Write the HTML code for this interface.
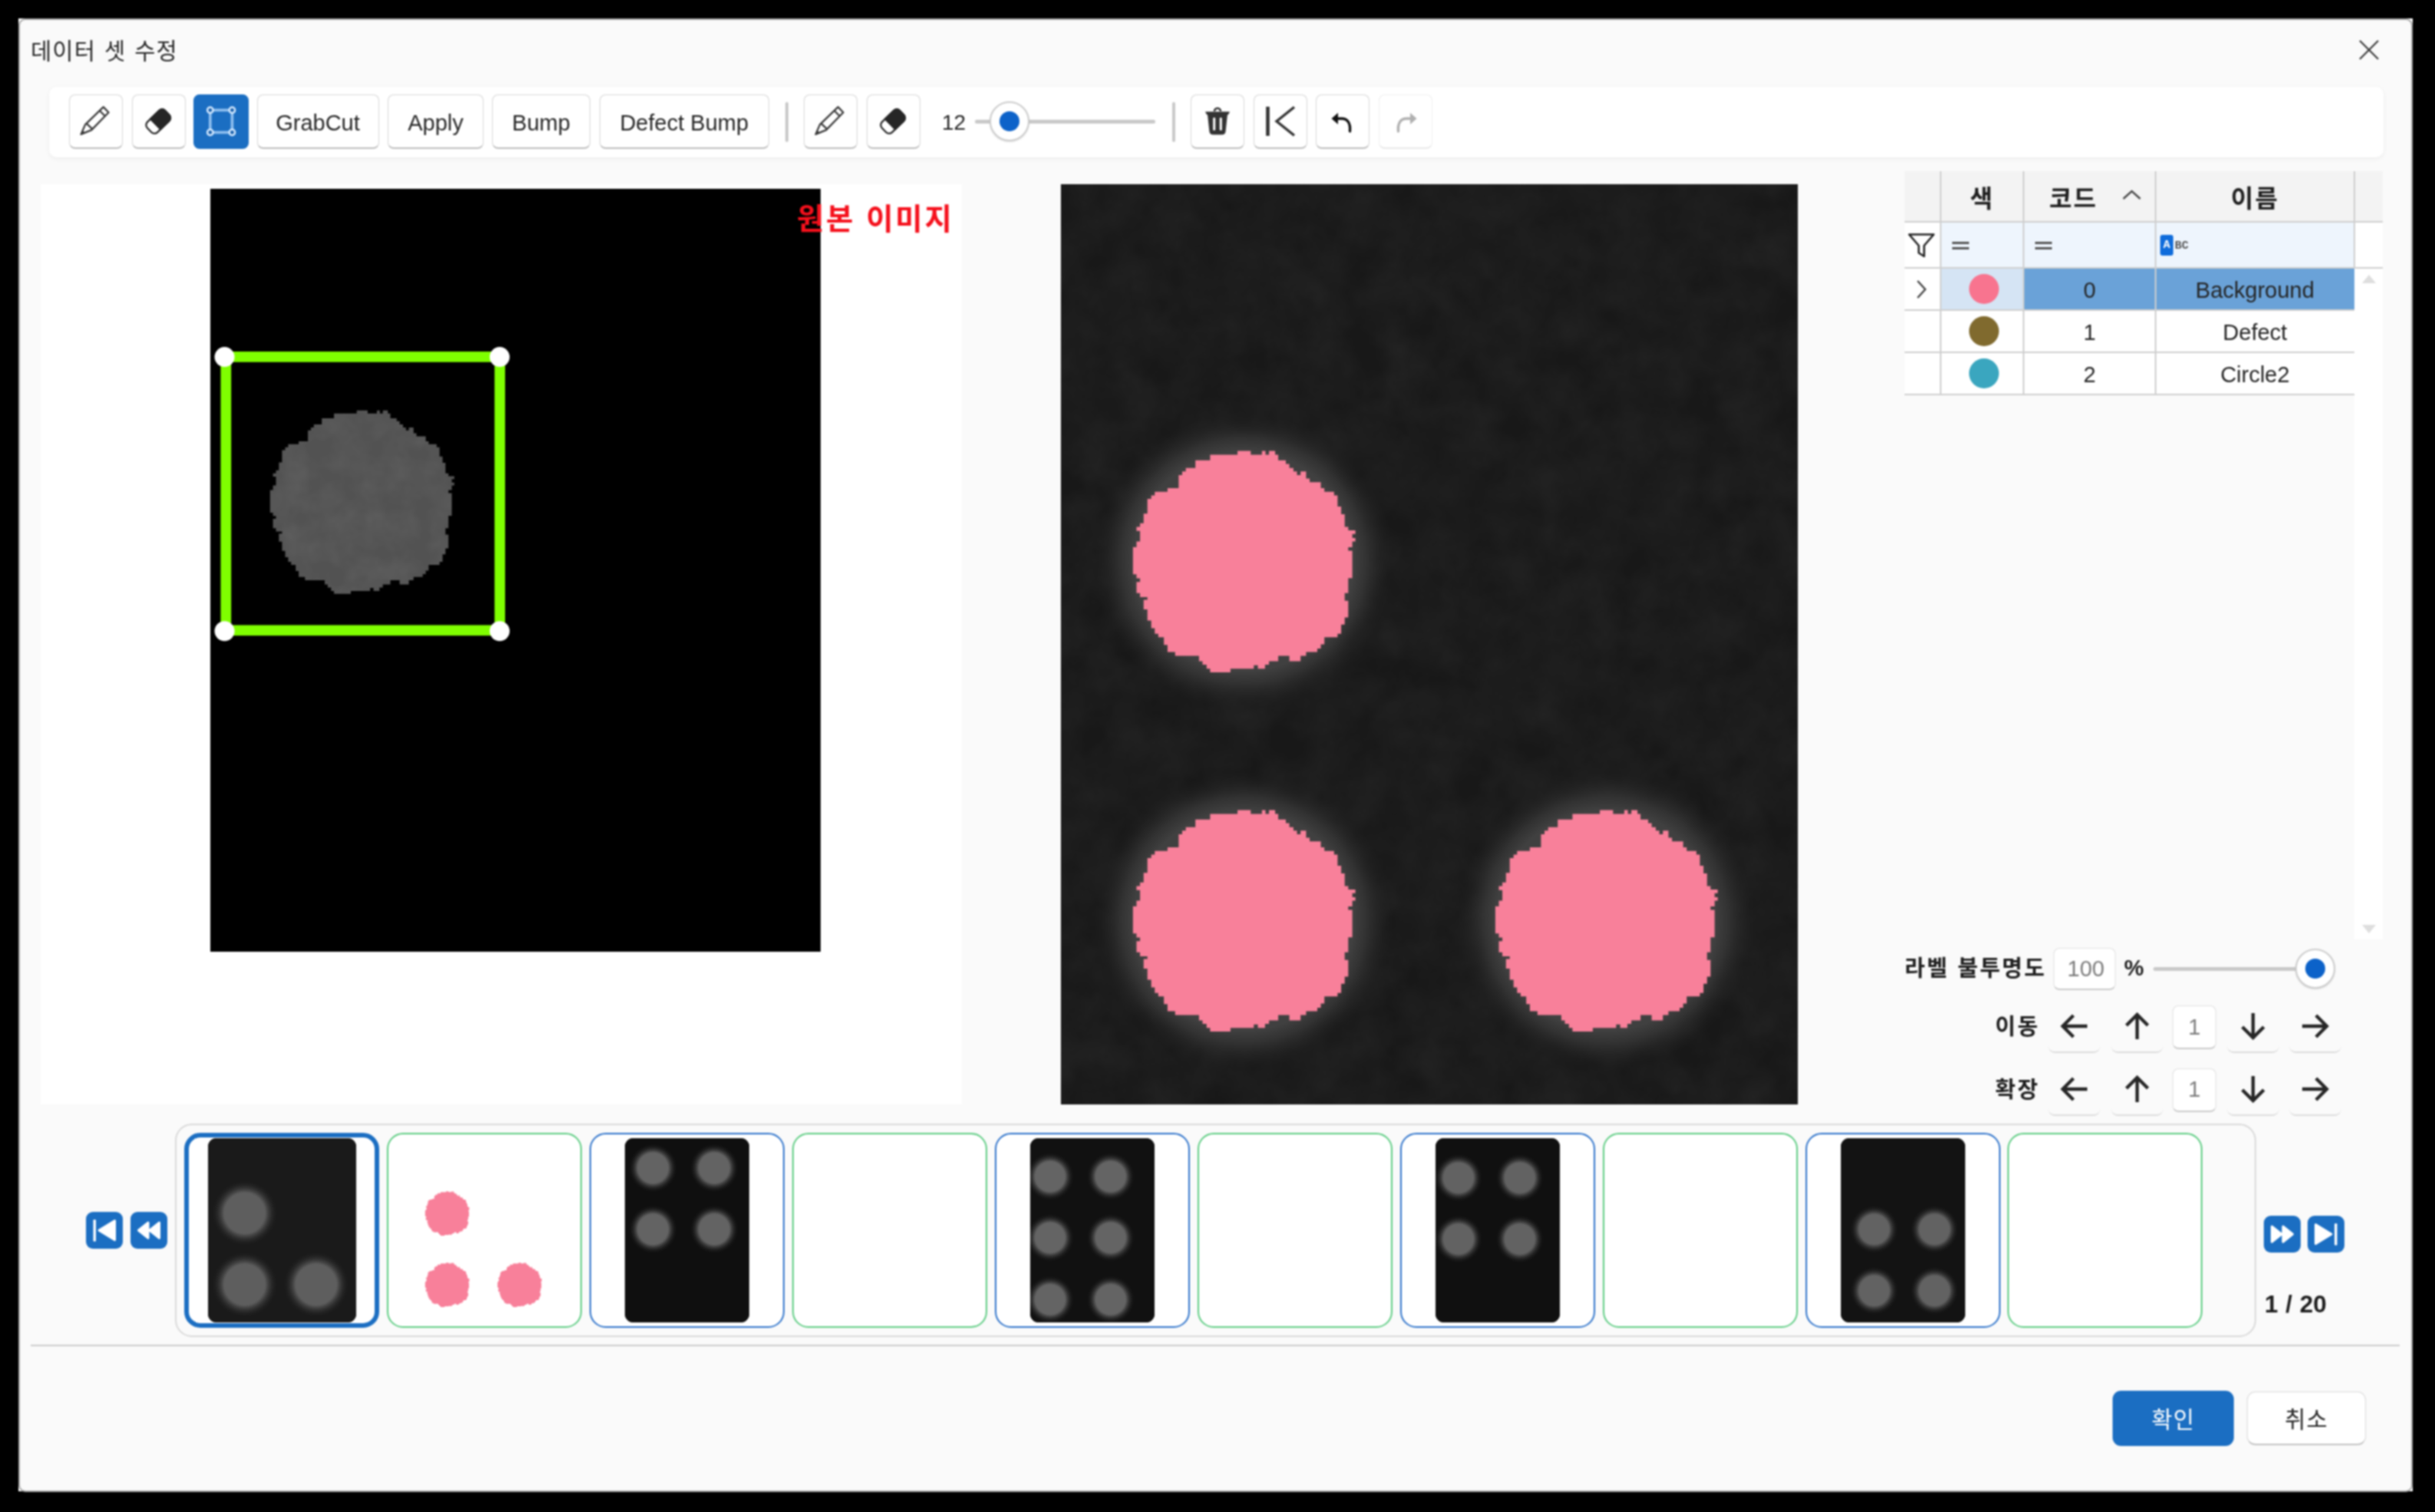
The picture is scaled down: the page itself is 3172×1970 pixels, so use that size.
<!DOCTYPE html><html lang="ko"><head><meta charset="utf-8"><title>데이터 셋 수정</title><style>
*{box-sizing:border-box;margin:0;padding:0}
html,body{width:3172px;height:1970px;background:#000;overflow:hidden}
body{position:relative;font-family:"Liberation Sans", "Noto Sans CJK KR", sans-serif;color:#333;font-size:29px;filter:blur(0.85px)}
.abs{position:absolute}
.corner{position:absolute;width:12px;height:12px;background:#fff}
#dlg{position:absolute;left:24px;top:24px;width:3119px;height:1919.5px;background:#fafafa;border:2px solid #a6a6a6;border-radius:9px}
#title{position:absolute;left:40px;top:45px;font-size:29.5px;line-height:44px;color:#262626;white-space:nowrap;letter-spacing:1.2px;word-spacing:1.5px}
#toolbar{position:absolute;left:64px;top:113px;width:3041px;height:92px;background:#fff;border-radius:10px;box-shadow:0 2px 6px rgba(0,0,0,.06)}
.tb{position:absolute;top:123px;height:71px;background:#fff;border:1.8px solid #d6d6d6;border-bottom:2.4px solid #bdbdbd;border-radius:8px;display:flex;align-items:center;justify-content:center;font-size:29px;color:#262626;white-space:nowrap}
.tb.tx{padding-top:5px}
.tb .ic{position:absolute;left:-1.6px;top:-1.6px}
.tb.on{background:#1b6ec2;border-color:#1b6ec2;top:122.9px;height:70.7px}
.tb.dis{border-color:#efefef;border-bottom-color:#e8e8e8}
.sep{position:absolute;top:132.5px;width:4.6px;height:52px;background:#c8c8c8;border-radius:2px}
.track{position:absolute;height:5px;background:#c9c9c9;border-radius:2.5px}
.knob{position:absolute;width:52px;height:52px;border-radius:50%;background:#fff;border:2px solid #cdcdcd;box-shadow:0 1px 2px rgba(0,0,0,.15)}
.knob i{position:absolute;left:50%;top:50%;width:26px;height:26px;margin:-13px 0 0 -13px;border-radius:50%;background:#0c62c9}
#lpanel{position:absolute;left:52.5px;top:240px;width:1200.5px;height:1199px;background:#fff}
#limg{position:absolute;left:274px;top:246px;width:795px;height:994px;background:#000}
#rimg{position:absolute;left:1382px;top:240px;width:960px;height:1199px;background:#1c1c1c;overflow:hidden}
#orig{position:absolute;left:1038px;top:261.5px;font-size:38.5px;line-height:48px;font-weight:bold;color:#f5101c;white-space:nowrap;letter-spacing:2.6px;word-spacing:1px}
.th{position:absolute;top:1476px;width:254px;height:254px;border-radius:21px;background:#fff}
.th.g{border:2.4px solid #5dcc82}
.th.b{border:2.4px solid #2d72ca}
.th.sel{border:6.2px solid #1b6ec2}
.ti{position:absolute;top:1483px;height:240px;border-radius:11px;overflow:hidden;background:#151515}
#strip{position:absolute;left:228px;top:1464px;width:2711px;height:277.5px;border:2px solid #d9d9d9;border-radius:22px;background:#fafafa}
.nav{position:absolute;width:48px;height:48px;border-radius:9px;background:#1b6ec2}
#hr{position:absolute;left:40px;top:1751.5px;width:3086px;height:2.8px;background:#cbcbcb}
#ok{position:absolute;left:2752px;top:1812px;width:158px;height:72px;border-radius:11px;background:#1b6ec2;color:#fff;font-size:29.5px;letter-spacing:1px;padding-bottom:2px;display:flex;align-items:center;justify-content:center}
#cancel{position:absolute;left:2927px;top:1813px;width:155px;height:70px;border-radius:11px;background:#fff;border:1.8px solid #dadada;border-bottom:2.4px solid #c2c2c2;color:#262626;font-size:29.5px;letter-spacing:1px;padding-bottom:2px;display:flex;align-items:center;justify-content:center}
.lbl{position:absolute;font-weight:bold;font-size:29px;line-height:40px;white-space:nowrap;color:#1e1e1e;letter-spacing:2.2px;word-spacing:1px}
.inp{position:absolute;background:#fff;border:1.8px solid #e0e0e0;border-bottom:2.4px solid #cacaca;border-radius:8px;color:#7c7c7c;font-size:29px;display:flex;align-items:center}
.ab{position:absolute;width:68px;height:65px;border-radius:9px;border-bottom:2.4px solid #dcdcdc}
/* table */
.cell{position:absolute;display:flex;align-items:center;justify-content:center;font-size:29px;color:#242424;white-space:nowrap;padding-top:4px}
.cell .dot{margin-top:-4px;margin-left:4px;width:39px;height:39px}
.vl{position:absolute;width:2px;background:#cecece}
.hl{position:absolute;height:2px;background:#cecece}
.dot{width:40px;height:40px;border-radius:50%}
</style></head><body>
<div class="corner" style="left:24px;top:24px"></div>
<div class="corner" style="left:3131px;top:24px"></div>
<div class="corner" style="left:24px;top:1931px"></div>
<div class="corner" style="left:3131px;top:1931px"></div>
<div id="dlg"></div>
<div id="title">데이터 셋 수정</div>
<svg class="abs" style="left:3070.5px;top:50px" width="30" height="30" viewBox="0 0 30 30"><path d="M3 3 L27 27 M27 3 L3 27" stroke="#3a3a3a" stroke-width="2.2" fill="none"/></svg>
<div id="toolbar"></div>
<div class="tb " style="left:90.0px;width:70.0px"><svg class="ic" width="70" height="70" viewBox="0 0 70 70"><g fill="none" stroke="#3a3a3a" stroke-width="2.3" stroke-linejoin="round"><path d="M45.7 17.4 L52.5 24.5 L30.2 47.4 L16.6 52.9 L22 40.4 Z"/><path d="M40.9 22.2 L47.8 29.3"/><path d="M23.6 38.8 L31.4 46.2"/></g><path d="M15.4 54.2 L18.3 47.4 L22.6 51.4 Z" fill="#3a3a3a"/></svg></div>
<div class="tb " style="left:171.5px;width:70.0px"><svg class="ic" width="70" height="70" viewBox="0 0 70 70"><g transform="rotate(-44 35.2 36.2)"><rect x="19" y="26.8" width="32.4" height="18.8" rx="5.6" fill="#fff" stroke="#2a2a2a" stroke-width="2.3"/><path d="M30.2 26.8 H45.8 a5.6 5.6 0 0 1 5.6 5.6 v7.6 a5.6 5.6 0 0 1 -5.6 5.6 H30.2 Z" fill="#262626" stroke="#262626" stroke-width="2.3"/></g></svg></div>
<div class="tb on" style="left:252.0px;width:72.0px"><svg class="ic" width="72" height="72" viewBox="0 0 72 72"><rect x="22.8" y="21.5" width="28.6" height="29" fill="none" stroke="#8fbfef" stroke-width="3.7"/><g fill="#1b62ae" stroke="#d4e9ff" stroke-width="2.5"><circle cx="22.8" cy="21.5" r="3.7"/><circle cx="51.4" cy="21.5" r="3.7"/><circle cx="22.8" cy="50.5" r="3.7"/><circle cx="51.4" cy="50.5" r="3.7"/></g></svg></div>
<div class="tb tx" style="left:334.5px;width:159.0px">GrabCut</div>
<div class="tb tx" style="left:505.0px;width:125.0px">Apply</div>
<div class="tb tx" style="left:641.0px;width:128.0px">Bump</div>
<div class="tb tx" style="left:780.5px;width:221.5px">Defect Bump</div>
<div class="sep" style="left:1022.5px"></div>
<div class="tb " style="left:1047.0px;width:70.0px"><svg class="ic" width="70" height="70" viewBox="0 0 70 70"><g fill="none" stroke="#3a3a3a" stroke-width="2.3" stroke-linejoin="round"><path d="M45.7 17.4 L52.5 24.5 L30.2 47.4 L16.6 52.9 L22 40.4 Z"/><path d="M40.9 22.2 L47.8 29.3"/><path d="M23.6 38.8 L31.4 46.2"/></g><path d="M15.4 54.2 L18.3 47.4 L22.6 51.4 Z" fill="#3a3a3a"/></svg></div>
<div class="tb " style="left:1128.5px;width:70.0px"><svg class="ic" width="70" height="70" viewBox="0 0 70 70"><g transform="rotate(-44 35.2 36.2)"><rect x="19" y="26.8" width="32.4" height="18.8" rx="5.6" fill="#fff" stroke="#2a2a2a" stroke-width="2.3"/><path d="M30.2 26.8 H45.8 a5.6 5.6 0 0 1 5.6 5.6 v7.6 a5.6 5.6 0 0 1 -5.6 5.6 H30.2 Z" fill="#262626" stroke="#262626" stroke-width="2.3"/></g></svg></div>
<div class="abs" style="left:1227px;top:140px;font-size:28px;line-height:40px;color:#242424">12</div>
<div class="track" style="left:1270px;top:156px;width:235px"></div>
<div class="knob" style="left:1288.5px;top:132px"><i></i></div>
<div class="sep" style="left:1526.5px"></div>
<div class="tb " style="left:1551.0px;width:70.0px"><svg width="34" height="38" viewBox="0 0 34 38"><path d="M13 6 a4 4 0 0 1 8 0" fill="none" stroke="#333" stroke-width="2.6"/><path d="M1 6.5 H33 L31 10.5 H3 Z" fill="#333"/><path d="M4 10 H30 L27.6 32 a5 5 0 0 1 -5 4.5 H11.4 a5 5 0 0 1 -5 -4.5 Z" fill="#333"/><rect x="11.2" y="14" width="3" height="17" rx="1.5" fill="#fff"/><rect x="19.8" y="14" width="3" height="17" rx="1.5" fill="#fff"/></svg></div>
<div class="tb " style="left:1632.5px;width:70.0px"><svg width="44" height="44" viewBox="0 0 44 44"><path d="M5.5 3 V41" stroke="#333" stroke-width="4.6" fill="none"/><path d="M40 3.5 L17 22 L40 40.5" stroke="#333" stroke-width="3.4" fill="none" stroke-linejoin="miter"/></svg></div>
<div class="tb " style="left:1714.0px;width:70.0px"><span style="display:flex;padding-top:3px"><svg width="32" height="30" viewBox="0 0 32 30"><path d="M9 9.5 H15 C22 9.5 26.5 15 25.5 26" fill="none" stroke="#111" stroke-width="3.4" stroke-linecap="round"/><path d="M1.5 9.5 L10 2 V17 Z" fill="#111"/></svg></span></div>
<div class="tb dis" style="left:1795.5px;width:70.0px"><span style="display:flex;padding-top:3px"><svg width="32" height="30" viewBox="0 0 32 30"><path d="M23 9.5 H17 C10 9.5 5.5 15 6.5 26" fill="none" stroke="#b0b0b0" stroke-width="3.4" stroke-linecap="round"/><path d="M30.500 9.5 L22 2 V17 Z" fill="#b0b0b0"/></svg></span></div>
<div id="lpanel"></div><div id="limg"></div>
<svg class="abs" style="left:274px;top:246px" width="795" height="994" viewBox="274 246 795 994">
<defs><clipPath id="bc"><path d="M464.7,534.7 L478.9,534.7 L478.9,538.8 L491.0,538.8 L491.0,534.7 L494.8,534.7 L494.8,538.8 L498.7,538.8 L498.7,534.7 L505.2,534.7 L505.2,538.8 L508.5,538.8 L508.5,544.9 L516.7,544.9 L516.7,548.7 L520.6,548.7 L520.6,553.1 L525.0,553.1 L525.0,556.9 L528.8,556.9 L528.8,560.8 L532.6,560.8 L532.6,556.9 L538.7,556.9 L538.7,564.6 L542.5,564.6 L542.5,568.4 L554.6,568.4 L554.6,575.0 L558.4,575.0 L558.4,578.8 L568.8,578.8 L568.8,582.7 L572.6,582.7 L572.6,594.7 L576.5,594.7 L576.5,603.0 L580.3,603.0 L580.3,616.7 L584.2,616.7 L584.2,620.5 L591.8,620.5 L591.8,624.3 L588.5,624.3 L588.5,628.7 L591.8,628.7 L591.8,632.6 L588.5,632.6 L588.5,638.6 L584.2,638.6 L584.2,642.4 L588.5,642.4 L588.5,672.0 L584.2,672.0 L584.2,688.2 L580.3,688.2 L580.3,696.4 L584.2,696.4 L584.2,714.5 L580.3,714.5 L580.3,722.2 L576.5,722.2 L576.5,732.0 L572.6,732.0 L572.6,735.9 L558.4,735.9 L558.4,743.6 L554.6,743.6 L554.6,747.9 L550.7,747.9 L550.7,751.8 L538.7,751.8 L538.7,755.9 L532.6,755.9 L532.6,761.6 L520.6,761.6 L520.6,755.9 L508.5,755.9 L508.5,761.6 L498.7,761.6 L498.7,765.5 L494.3,765.5 L494.3,769.9 L486.6,769.9 L486.6,766.0 L482.2,766.0 L482.2,769.9 L457.0,769.9 L457.0,773.7 L435.1,773.7 L435.1,769.9 L431.3,769.9 L431.3,765.5 L426.9,765.5 L426.9,761.6 L423.0,761.6 L423.0,755.9 L397.3,755.9 L397.3,751.8 L389.1,751.8 L389.1,744.1 L385.2,744.1 L385.2,735.9 L379.2,735.9 L379.2,732.0 L375.4,732.0 L375.4,726.0 L371.5,726.0 L371.5,717.8 L367.4,717.8 L367.4,705.7 L363.3,705.7 L363.3,695.3 L367.4,695.3 L367.4,692.6 L359.5,692.6 L359.5,688.2 L355.6,688.2 L355.6,676.1 L359.5,676.1 L359.5,672.3 L355.6,672.3 L355.6,667.9 L351.8,667.9 L351.8,638.6 L355.6,638.6 L355.6,632.6 L359.5,632.6 L359.5,621.0 L355.6,621.0 L355.6,616.7 L359.5,616.7 L359.5,612.8 L363.3,612.8 L363.3,602.4 L367.4,602.4 L367.4,586.5 L371.5,586.5 L371.5,582.7 L375.4,582.7 L375.4,578.8 L389.1,578.8 L389.1,575.0 L401.1,575.0 L401.1,560.8 L405.0,560.8 L405.0,556.9 L408.8,556.9 L408.8,553.1 L419.2,553.1 L419.2,544.9 L435.1,544.9 L435.1,538.8 L464.7,538.8Z"/></clipPath><filter id="nz2" x="0" y="0" width="100%" height="100%"><feTurbulence type="fractalNoise" baseFrequency="0.03" numOctaves="3" seed="11"/><feColorMatrix type="matrix" values="0 0 0 0 1  0 0 0 0 1  0 0 0 0 1  0.06 0.06 0.06 0 -0.07"/></filter></defs>
<path d="M464.7,534.7 L478.9,534.7 L478.9,538.8 L491.0,538.8 L491.0,534.7 L494.8,534.7 L494.8,538.8 L498.7,538.8 L498.7,534.7 L505.2,534.7 L505.2,538.8 L508.5,538.8 L508.5,544.9 L516.7,544.9 L516.7,548.7 L520.6,548.7 L520.6,553.1 L525.0,553.1 L525.0,556.9 L528.8,556.9 L528.8,560.8 L532.6,560.8 L532.6,556.9 L538.7,556.9 L538.7,564.6 L542.5,564.6 L542.5,568.4 L554.6,568.4 L554.6,575.0 L558.4,575.0 L558.4,578.8 L568.8,578.8 L568.8,582.7 L572.6,582.7 L572.6,594.7 L576.5,594.7 L576.5,603.0 L580.3,603.0 L580.3,616.7 L584.2,616.7 L584.2,620.5 L591.8,620.5 L591.8,624.3 L588.5,624.3 L588.5,628.7 L591.8,628.7 L591.8,632.6 L588.5,632.6 L588.5,638.6 L584.2,638.6 L584.2,642.4 L588.5,642.4 L588.5,672.0 L584.2,672.0 L584.2,688.2 L580.3,688.2 L580.3,696.4 L584.2,696.4 L584.2,714.5 L580.3,714.5 L580.3,722.2 L576.5,722.2 L576.5,732.0 L572.6,732.0 L572.6,735.9 L558.4,735.9 L558.4,743.6 L554.6,743.6 L554.6,747.9 L550.7,747.9 L550.7,751.8 L538.7,751.8 L538.7,755.9 L532.6,755.9 L532.6,761.6 L520.6,761.6 L520.6,755.9 L508.5,755.9 L508.5,761.6 L498.7,761.6 L498.7,765.5 L494.3,765.5 L494.3,769.9 L486.6,769.9 L486.6,766.0 L482.2,766.0 L482.2,769.9 L457.0,769.9 L457.0,773.7 L435.1,773.7 L435.1,769.9 L431.3,769.9 L431.3,765.5 L426.9,765.5 L426.9,761.6 L423.0,761.6 L423.0,755.9 L397.3,755.9 L397.3,751.8 L389.1,751.8 L389.1,744.1 L385.2,744.1 L385.2,735.9 L379.2,735.9 L379.2,732.0 L375.4,732.0 L375.4,726.0 L371.5,726.0 L371.5,717.8 L367.4,717.8 L367.4,705.7 L363.3,705.7 L363.3,695.3 L367.4,695.3 L367.4,692.6 L359.5,692.6 L359.5,688.2 L355.6,688.2 L355.6,676.1 L359.5,676.1 L359.5,672.3 L355.6,672.3 L355.6,667.9 L351.8,667.9 L351.8,638.6 L355.6,638.6 L355.6,632.6 L359.5,632.6 L359.5,621.0 L355.6,621.0 L355.6,616.7 L359.5,616.7 L359.5,612.8 L363.3,612.8 L363.3,602.4 L367.4,602.4 L367.4,586.5 L371.5,586.5 L371.5,582.7 L375.4,582.7 L375.4,578.8 L389.1,578.8 L389.1,575.0 L401.1,575.0 L401.1,560.8 L405.0,560.8 L405.0,556.9 L408.8,556.9 L408.8,553.1 L419.2,553.1 L419.2,544.9 L435.1,544.9 L435.1,538.8 L464.7,538.8Z" fill="#525252"/>
<rect x="345" y="530" width="255" height="250" filter="url(#nz2)" clip-path="url(#bc)"/>
<rect x="294.3" y="464.9" width="356.8" height="356.4" fill="none" stroke="#7fff00" stroke-width="13.7"/>
<circle cx="292.5" cy="465.1" r="13" fill="#fff"/>
<circle cx="650.9" cy="465.1" r="13" fill="#fff"/>
<circle cx="292.5" cy="822.2" r="13" fill="#fff"/>
<circle cx="650.9" cy="822.2" r="13" fill="#fff"/>
</svg>
<div id="orig">원본 이미지</div>
<div id="rimg"><svg width="960" height="1199" viewBox="1382 240 960 1199">
<defs><radialGradient id="gl"><stop offset="0" stop-color="#424242"/><stop offset="0.73" stop-color="#404040"/><stop offset="0.81" stop-color="#383838" stop-opacity=".8"/><stop offset="0.9" stop-color="#2e2e2e" stop-opacity=".35"/><stop offset="1" stop-color="#1d1d1d" stop-opacity="0"/></radialGradient>
<filter id="nz" x="0" y="0" width="100%" height="100%"><feTurbulence type="fractalNoise" baseFrequency="0.02" numOctaves="4" seed="7"/><feColorMatrix type="matrix" values="0 0 0 0 1  0 0 0 0 1  0 0 0 0 1  0.035 0.035 0.035 0 -0.035"/></filter></defs>
<rect x="1382" y="240" width="960" height="1199" fill="#181818"/>
<rect x="1382" y="240" width="960" height="1199" filter="url(#nz)"/>
<circle cx="1620" cy="731" r="197" fill="url(#gl)"/>
<path d="M1612.1,587.5 L1629.3,587.5 L1629.3,592.5 L1643.9,592.5 L1643.9,587.5 L1648.5,587.5 L1648.5,592.5 L1653.1,592.5 L1653.1,587.5 L1661.1,587.5 L1661.1,592.5 L1665.1,592.5 L1665.1,599.8 L1675.0,599.8 L1675.0,604.4 L1679.6,604.4 L1679.6,609.7 L1684.9,609.7 L1684.9,614.3 L1689.5,614.3 L1689.5,618.9 L1694.2,618.9 L1694.2,614.3 L1701.4,614.3 L1701.4,623.6 L1706.1,623.6 L1706.1,628.2 L1720.6,628.2 L1720.6,636.1 L1725.2,636.1 L1725.2,640.8 L1737.8,640.8 L1737.8,645.4 L1742.4,645.4 L1742.4,660.0 L1747.1,660.0 L1747.1,669.9 L1751.7,669.9 L1751.7,686.4 L1756.3,686.4 L1756.3,691.0 L1765.6,691.0 L1765.6,695.7 L1761.6,695.7 L1761.6,701.0 L1765.6,701.0 L1765.6,705.6 L1761.6,705.6 L1761.6,712.9 L1756.3,712.9 L1756.3,717.5 L1761.6,717.5 L1761.6,753.2 L1756.3,753.2 L1756.3,772.8 L1751.7,772.8 L1751.7,782.7 L1756.3,782.7 L1756.3,804.5 L1751.7,804.5 L1751.7,813.8 L1747.1,813.8 L1747.1,825.7 L1742.4,825.7 L1742.4,830.3 L1725.2,830.3 L1725.2,839.6 L1720.6,839.6 L1720.6,844.9 L1716.0,844.9 L1716.0,849.5 L1701.4,849.5 L1701.4,854.5 L1694.2,854.5 L1694.2,861.4 L1679.6,861.4 L1679.6,854.5 L1665.1,854.5 L1665.1,861.4 L1653.1,861.4 L1653.1,866.0 L1647.9,866.0 L1647.9,871.3 L1638.6,871.3 L1638.6,866.7 L1633.3,866.7 L1633.3,871.3 L1602.9,871.3 L1602.9,876.0 L1576.4,876.0 L1576.4,871.3 L1571.8,871.3 L1571.8,866.0 L1566.5,866.0 L1566.5,861.4 L1561.9,861.4 L1561.9,854.5 L1530.8,854.5 L1530.8,849.5 L1520.9,849.5 L1520.9,840.2 L1516.2,840.2 L1516.2,830.3 L1508.9,830.3 L1508.9,825.7 L1504.3,825.7 L1504.3,818.4 L1499.7,818.4 L1499.7,808.5 L1494.7,808.5 L1494.7,793.9 L1489.8,793.9 L1489.8,781.4 L1494.7,781.4 L1494.7,778.1 L1485.1,778.1 L1485.1,772.8 L1480.5,772.8 L1480.5,758.2 L1485.1,758.2 L1485.1,753.6 L1480.5,753.6 L1480.5,748.3 L1475.9,748.3 L1475.9,712.8 L1480.5,712.9 L1480.5,705.6 L1485.1,705.6 L1485.1,691.7 L1480.5,691.7 L1480.5,686.4 L1485.1,686.4 L1485.1,681.8 L1489.8,681.8 L1489.8,669.2 L1494.7,669.2 L1494.7,650.0 L1499.7,650.0 L1499.7,645.4 L1504.3,645.4 L1504.3,640.8 L1520.9,640.8 L1520.9,636.1 L1535.4,636.1 L1535.4,618.9 L1540.0,618.9 L1540.0,614.3 L1544.7,614.3 L1544.7,609.7 L1557.2,609.7 L1557.2,599.8 L1576.4,599.8 L1576.4,592.5 L1612.1,592.5Z" fill="#f8809a"/>
<circle cx="1620" cy="1199" r="197" fill="url(#gl)"/>
<path d="M1612.1,1055.5 L1629.3,1055.5 L1629.3,1060.5 L1643.9,1060.5 L1643.9,1055.5 L1648.5,1055.5 L1648.5,1060.5 L1653.1,1060.5 L1653.1,1055.5 L1661.1,1055.5 L1661.1,1060.5 L1665.1,1060.5 L1665.1,1067.8 L1675.0,1067.8 L1675.0,1072.4 L1679.6,1072.4 L1679.6,1077.7 L1684.9,1077.7 L1684.9,1082.3 L1689.5,1082.3 L1689.5,1086.9 L1694.2,1086.9 L1694.2,1082.3 L1701.4,1082.3 L1701.4,1091.6 L1706.1,1091.6 L1706.1,1096.2 L1720.6,1096.2 L1720.6,1104.1 L1725.2,1104.1 L1725.2,1108.8 L1737.8,1108.8 L1737.8,1113.4 L1742.4,1113.4 L1742.4,1128.0 L1747.1,1128.0 L1747.1,1137.9 L1751.7,1137.9 L1751.7,1154.4 L1756.3,1154.4 L1756.3,1159.0 L1765.6,1159.0 L1765.6,1163.7 L1761.6,1163.7 L1761.6,1169.0 L1765.6,1169.0 L1765.6,1173.6 L1761.6,1173.6 L1761.6,1180.9 L1756.3,1180.9 L1756.3,1185.5 L1761.6,1185.5 L1761.6,1221.2 L1756.3,1221.2 L1756.3,1240.8 L1751.7,1240.8 L1751.7,1250.7 L1756.3,1250.7 L1756.3,1272.5 L1751.7,1272.5 L1751.7,1281.8 L1747.1,1281.8 L1747.1,1293.7 L1742.4,1293.7 L1742.4,1298.3 L1725.2,1298.3 L1725.2,1307.6 L1720.6,1307.6 L1720.6,1312.9 L1716.0,1312.9 L1716.0,1317.5 L1701.4,1317.5 L1701.4,1322.5 L1694.2,1322.5 L1694.2,1329.4 L1679.6,1329.4 L1679.6,1322.5 L1665.1,1322.5 L1665.1,1329.4 L1653.1,1329.4 L1653.1,1334.0 L1647.9,1334.0 L1647.9,1339.3 L1638.6,1339.3 L1638.6,1334.7 L1633.3,1334.7 L1633.3,1339.3 L1602.9,1339.3 L1602.9,1344.0 L1576.4,1344.0 L1576.4,1339.3 L1571.8,1339.3 L1571.8,1334.0 L1566.5,1334.0 L1566.5,1329.4 L1561.9,1329.4 L1561.9,1322.5 L1530.8,1322.5 L1530.8,1317.5 L1520.9,1317.5 L1520.9,1308.2 L1516.2,1308.2 L1516.2,1298.3 L1508.9,1298.3 L1508.9,1293.7 L1504.3,1293.7 L1504.3,1286.4 L1499.7,1286.4 L1499.7,1276.5 L1494.7,1276.5 L1494.7,1261.9 L1489.8,1261.9 L1489.8,1249.4 L1494.7,1249.4 L1494.7,1246.1 L1485.1,1246.1 L1485.1,1240.8 L1480.5,1240.8 L1480.5,1226.2 L1485.1,1226.2 L1485.1,1221.6 L1480.5,1221.6 L1480.5,1216.3 L1475.9,1216.3 L1475.9,1180.8 L1480.5,1180.9 L1480.5,1173.6 L1485.1,1173.6 L1485.1,1159.7 L1480.5,1159.7 L1480.5,1154.4 L1485.1,1154.4 L1485.1,1149.8 L1489.8,1149.8 L1489.8,1137.2 L1494.7,1137.2 L1494.7,1118.0 L1499.7,1118.0 L1499.7,1113.4 L1504.3,1113.4 L1504.3,1108.8 L1520.9,1108.8 L1520.9,1104.1 L1535.4,1104.1 L1535.4,1086.9 L1540.0,1086.9 L1540.0,1082.3 L1544.7,1082.3 L1544.7,1077.7 L1557.2,1077.7 L1557.2,1067.8 L1576.4,1067.8 L1576.4,1060.5 L1612.1,1060.5Z" fill="#f8809a"/>
<circle cx="2092" cy="1199" r="197" fill="url(#gl)"/>
<path d="M2084.1,1055.5 L2101.3,1055.5 L2101.3,1060.5 L2115.9,1060.5 L2115.9,1055.5 L2120.5,1055.5 L2120.5,1060.5 L2125.1,1060.5 L2125.1,1055.5 L2133.1,1055.5 L2133.1,1060.5 L2137.1,1060.5 L2137.1,1067.8 L2147.0,1067.8 L2147.0,1072.4 L2151.6,1072.4 L2151.6,1077.7 L2156.9,1077.7 L2156.9,1082.3 L2161.5,1082.3 L2161.5,1086.9 L2166.2,1086.9 L2166.2,1082.3 L2173.4,1082.3 L2173.4,1091.6 L2178.1,1091.6 L2178.1,1096.2 L2192.6,1096.2 L2192.6,1104.1 L2197.2,1104.1 L2197.2,1108.8 L2209.8,1108.8 L2209.8,1113.4 L2214.4,1113.4 L2214.4,1128.0 L2219.1,1128.0 L2219.1,1137.9 L2223.7,1137.9 L2223.7,1154.4 L2228.3,1154.4 L2228.3,1159.0 L2237.6,1159.0 L2237.6,1163.7 L2233.6,1163.7 L2233.6,1169.0 L2237.6,1169.0 L2237.6,1173.6 L2233.6,1173.6 L2233.6,1180.9 L2228.3,1180.9 L2228.3,1185.5 L2233.6,1185.5 L2233.6,1221.2 L2228.3,1221.2 L2228.3,1240.8 L2223.7,1240.8 L2223.7,1250.7 L2228.3,1250.7 L2228.3,1272.5 L2223.7,1272.5 L2223.7,1281.8 L2219.1,1281.8 L2219.1,1293.7 L2214.4,1293.7 L2214.4,1298.3 L2197.2,1298.3 L2197.2,1307.6 L2192.6,1307.6 L2192.6,1312.9 L2188.0,1312.9 L2188.0,1317.5 L2173.4,1317.5 L2173.4,1322.5 L2166.2,1322.5 L2166.2,1329.4 L2151.6,1329.4 L2151.6,1322.5 L2137.1,1322.5 L2137.1,1329.4 L2125.1,1329.4 L2125.1,1334.0 L2119.9,1334.0 L2119.9,1339.3 L2110.6,1339.3 L2110.6,1334.7 L2105.3,1334.7 L2105.3,1339.3 L2074.9,1339.3 L2074.9,1344.0 L2048.4,1344.0 L2048.4,1339.3 L2043.8,1339.3 L2043.8,1334.0 L2038.5,1334.0 L2038.5,1329.4 L2033.9,1329.4 L2033.9,1322.5 L2002.8,1322.5 L2002.8,1317.5 L1992.9,1317.5 L1992.9,1308.2 L1988.2,1308.2 L1988.2,1298.3 L1980.9,1298.3 L1980.9,1293.7 L1976.3,1293.7 L1976.3,1286.4 L1971.7,1286.4 L1971.7,1276.5 L1966.7,1276.5 L1966.7,1261.9 L1961.8,1261.9 L1961.8,1249.4 L1966.7,1249.4 L1966.7,1246.1 L1957.1,1246.1 L1957.1,1240.8 L1952.5,1240.8 L1952.5,1226.2 L1957.1,1226.2 L1957.1,1221.6 L1952.5,1221.6 L1952.5,1216.3 L1947.9,1216.3 L1947.9,1180.8 L1952.5,1180.9 L1952.5,1173.6 L1957.1,1173.6 L1957.1,1159.7 L1952.5,1159.7 L1952.5,1154.4 L1957.1,1154.4 L1957.1,1149.8 L1961.8,1149.8 L1961.8,1137.2 L1966.7,1137.2 L1966.7,1118.0 L1971.7,1118.0 L1971.7,1113.4 L1976.3,1113.4 L1976.3,1108.8 L1992.9,1108.8 L1992.9,1104.1 L2007.4,1104.1 L2007.4,1086.9 L2012.0,1086.9 L2012.0,1082.3 L2016.7,1082.3 L2016.7,1077.7 L2029.2,1077.7 L2029.2,1067.8 L2048.4,1067.8 L2048.4,1060.5 L2084.1,1060.5Z" fill="#f8809a"/>
</svg></div>
<div class="abs" style="left:2481px;top:223px;width:623px;height:66px;background:#f3f3f3"></div>
<div class="abs" style="left:2481px;top:289px;width:47px;height:225px;background:#fff"></div>
<div class="abs" style="left:2528px;top:289px;width:539px;height:60px;background:#eef5fd"></div>
<div class="abs" style="left:3067px;top:289px;width:37px;height:935px;background:#fff"></div>
<div class="abs" style="left:2528px;top:349px;width:539px;height:165px;background:#fff"></div>
<div class="abs" style="left:2528px;top:349px;width:108px;height:55px;background:#d5e4f4"></div>
<div class="abs" style="left:2636px;top:349px;width:431px;height:55px;background:#6aa2d8"></div>
<div class="cell" style="left:2528px;top:223px;width:108px;height:66px;font-weight:bold;font-size:32px;color:#1e1e1e;letter-spacing:2px;padding-bottom:5px">색</div>
<div class="cell" style="left:2636px;top:223px;width:130px;height:66px;font-weight:bold;font-size:32px;color:#1e1e1e;letter-spacing:2px;padding-bottom:5px">코드</div>
<svg class="abs" style="left:2764px;top:247px" width="26" height="14" viewBox="0 0 26 14"><path d="M2 12 L13 2 L24 12" fill="none" stroke="#444" stroke-width="2.4"/></svg>
<div class="cell" style="left:2808px;top:223px;width:259px;height:66px;font-weight:bold;font-size:32px;color:#1e1e1e;letter-spacing:2px;padding-bottom:5px">이름</div>
<svg class="abs" style="left:2485px;top:303px" width="36" height="34" viewBox="0 0 36 34"><path d="M2 2.5 H34 L21.5 17 V31 L14.500 26.500 V17 Z" fill="none" stroke="#222" stroke-width="2.6" stroke-linejoin="round"/></svg>
<div class="abs" style="left:2543px;top:315px;width:22px;height:3px;background:#555"></div><div class="abs" style="left:2543px;top:322px;width:22px;height:3px;background:#555"></div>
<div class="abs" style="left:2651px;top:315px;width:22px;height:3px;background:#555"></div><div class="abs" style="left:2651px;top:322px;width:22px;height:3px;background:#555"></div>
<div class="abs" style="left:2814px;top:306px;width:17px;height:27px;border-radius:3px;background:#0f6cdb;color:#fff;font:bold 15px/27px 'Liberation Mono',monospace;text-align:center">A</div>
<div class="abs" style="left:2833px;top:311px;font:bold 15px/20px 'Liberation Mono',monospace;color:#555;letter-spacing:0px">BC</div>
<div class="cell" style="left:2528px;top:349px;width:108px;height:55px"><span class="dot" style="background:#f8748f"></span></div>
<div class="cell" style="left:2636px;top:349px;width:172px;height:55px">0</div>
<div class="cell" style="left:2808px;top:349px;width:259px;height:55px">Background</div>
<div class="cell" style="left:2528px;top:404px;width:108px;height:55px"><span class="dot" style="background:#806a2e"></span></div>
<div class="cell" style="left:2636px;top:404px;width:172px;height:55px">1</div>
<div class="cell" style="left:2808px;top:404px;width:259px;height:55px">Defect</div>
<div class="cell" style="left:2528px;top:459px;width:108px;height:55px"><span class="dot" style="background:#3aa6bf"></span></div>
<div class="cell" style="left:2636px;top:459px;width:172px;height:55px">2</div>
<div class="cell" style="left:2808px;top:459px;width:259px;height:55px">Circle2</div>
<svg class="abs" style="left:2495px;top:364px" width="16" height="26" viewBox="0 0 16 26"><path d="M3 2 L13 13 L3 24" fill="none" stroke="#444" stroke-width="2.4"/></svg>
<div class="vl" style="left:2527px;top:223px;height:291px"></div>
<div class="vl" style="left:2635px;top:223px;height:291px"></div>
<div class="vl" style="left:2807px;top:223px;height:291px"></div>
<div class="vl" style="left:3066px;top:223px;height:126px"></div>
<div class="hl" style="left:2481px;top:288px;width:623px"></div>
<div class="hl" style="left:2481px;top:348px;width:623px"></div>
<div class="hl" style="left:2481px;top:403px;width:586px"></div>
<div class="hl" style="left:2481px;top:458px;width:586px"></div>
<div class="hl" style="left:2481px;top:513px;width:586px"></div>
<svg class="abs" style="left:3076px;top:356px" width="20" height="14" viewBox="0 0 20 14"><path d="M1 13 L10 2 L19 13 Z" fill="#dedede"/></svg>
<svg class="abs" style="left:3076px;top:1204px" width="20" height="14" viewBox="0 0 20 14"><path d="M1 1 L10 12 L19 1 Z" fill="#dedede"/></svg>
<div class="lbl" style="left:2481px;top:1242px">라벨 불투명도</div>
<div class="inp" style="left:2674.5px;top:1235px;width:81px;height:55px;justify-content:flex-end;padding-right:13px">100</div>
<div class="lbl" style="left:2767px;top:1241px">%</div>
<div class="track" style="left:2805px;top:1260px;width:205px"></div>
<div class="knob" style="left:2990px;top:1236px"><i></i></div>
<div class="lbl" style="left:2599px;top:1318.0px">이동</div>
<div class="ab" style="left:2667.5px;top:1307.0px"></div>
<div class="abs" style="left:2683.5px;top:1319.0px"><svg width="36" height="36" viewBox="0 0 36 36"><path d="M35 18 H4 M17 4 L3 18 L17 32" fill="none" stroke="#262626" stroke-width="4.4"/></svg></div>
<div class="ab" style="left:2749.5px;top:1307.0px"></div>
<div class="abs" style="left:2765.5px;top:1319.0px"><svg width="36" height="36" viewBox="0 0 36 36"><path d="M18 35 V4 M4 17 L18 3 L32 17" fill="none" stroke="#262626" stroke-width="4.4"/></svg></div>
<div class="ab" style="left:2900.5px;top:1307.0px"></div>
<div class="abs" style="left:2916.5px;top:1319.0px"><svg width="36" height="36" viewBox="0 0 36 36"><path d="M18 1 V32 M4 19 L18 33 L32 19" fill="none" stroke="#262626" stroke-width="4.4"/></svg></div>
<div class="ab" style="left:2982.0px;top:1307.0px"></div>
<div class="abs" style="left:2998.0px;top:1319.0px"><svg width="36" height="36" viewBox="0 0 36 36"><path d="M1 18 H32 M19 4 L33 18 L19 32" fill="none" stroke="#262626" stroke-width="4.4"/></svg></div>
<div class="inp" style="left:2830px;top:1310.0px;width:57px;height:57px;justify-content:center">1</div>
<div class="lbl" style="left:2599px;top:1399.5px">확장</div>
<div class="ab" style="left:2667.5px;top:1388.5px"></div>
<div class="abs" style="left:2683.5px;top:1400.5px"><svg width="36" height="36" viewBox="0 0 36 36"><path d="M35 18 H4 M17 4 L3 18 L17 32" fill="none" stroke="#262626" stroke-width="4.4"/></svg></div>
<div class="ab" style="left:2749.5px;top:1388.5px"></div>
<div class="abs" style="left:2765.5px;top:1400.5px"><svg width="36" height="36" viewBox="0 0 36 36"><path d="M18 35 V4 M4 17 L18 3 L32 17" fill="none" stroke="#262626" stroke-width="4.4"/></svg></div>
<div class="ab" style="left:2900.5px;top:1388.5px"></div>
<div class="abs" style="left:2916.5px;top:1400.5px"><svg width="36" height="36" viewBox="0 0 36 36"><path d="M18 1 V32 M4 19 L18 33 L32 19" fill="none" stroke="#262626" stroke-width="4.4"/></svg></div>
<div class="ab" style="left:2982.0px;top:1388.5px"></div>
<div class="abs" style="left:2998.0px;top:1400.5px"><svg width="36" height="36" viewBox="0 0 36 36"><path d="M1 18 H32 M19 4 L33 18 L19 32" fill="none" stroke="#262626" stroke-width="4.4"/></svg></div>
<div class="inp" style="left:2830px;top:1391.5px;width:57px;height:57px;justify-content:center">1</div>
<div id="strip"></div>
<div class="nav" style="left:112.3px;top:1579.0px"><svg width="48" height="48" viewBox="0 0 48 48"><rect x="9.5" y="10" width="3.4" height="28.500" rx="1.2" fill="#fff"/><path d="M37.500 11.500 L17 24 L37.500 36.500 Z" fill="#fff" stroke="#fff" stroke-width="3" stroke-linejoin="round"/></svg></div>
<div class="nav" style="left:170.3px;top:1579.0px"><svg width="48" height="48" viewBox="0 0 48 48"><path d="M23 14 L10.500 24 L23 34 Z M37.500 14 L25 24 L37.500 34 Z" fill="#fff" stroke="#fff" stroke-width="3" stroke-linejoin="round"/></svg></div>
<div class="nav" style="left:2948.7px;top:1583.5px"><svg width="48" height="48" viewBox="0 0 48 48"><path d="M10.500 14 L23 24 L10.500 34 Z M25 14 L37.500 24 L25 34 Z" fill="#fff" stroke="#fff" stroke-width="3" stroke-linejoin="round"/></svg></div>
<div class="nav" style="left:3006.2px;top:1583.5px"><svg width="48" height="48" viewBox="0 0 48 48"><rect x="35.1" y="10" width="3.4" height="28.500" rx="1.2" fill="#fff"/><path d="M10.500 11.500 L31 24 L10.500 36.500 Z" fill="#fff" stroke="#fff" stroke-width="3" stroke-linejoin="round"/></svg></div>
<div class="abs" style="left:2950px;top:1678.5px;font-size:31.5px;line-height:40px;font-weight:bold;color:#1c1c1c;white-space:nowrap;word-spacing:1px">1 / 20</div>
<div class="th sel" style="left:240.3px"></div>
<div class="th g" style="left:504.2px"></div>
<div class="th b" style="left:768.1px"></div>
<div class="th g" style="left:1032.0px"></div>
<div class="th b" style="left:1295.9px"></div>
<div class="th g" style="left:1559.8px"></div>
<div class="th b" style="left:1823.7px"></div>
<div class="th g" style="left:2087.6px"></div>
<div class="th b" style="left:2351.5px"></div>
<div class="th g" style="left:2615.4px"></div>
<div class="ti" style="left:271px;width:193px"><svg width="193" height="240" viewBox="0 0 193 240"><defs><radialGradient id="tga"><stop offset="0" stop-color="#5e5e5e"/><stop offset="0.62" stop-color="#5e5e5e"/><stop offset="1" stop-color="#1a1a1a" stop-opacity="0"/></radialGradient></defs><rect width="193" height="240" fill="#1a1a1a"/><circle cx="47.7" cy="97.6" r="43.0" fill="url(#tga)"/><circle cx="47.7" cy="190.7" r="43.0" fill="url(#tga)"/><circle cx="140.8" cy="190.7" r="43.0" fill="url(#tga)"/></svg></div>
<svg class="abs" style="left:504px;top:1476px" width="254" height="254" viewBox="0 0 254 254">
<path d="M77.0,76.2 L80.5,76.2 L80.5,77.2 L83.4,77.2 L83.4,76.2 L84.3,76.2 L84.3,77.2 L85.2,77.2 L85.2,76.2 L86.8,76.2 L86.8,77.2 L87.6,77.2 L87.6,78.7 L89.6,78.7 L89.6,79.6 L90.5,79.6 L90.5,80.6 L91.6,80.6 L91.6,81.6 L92.5,81.6 L92.5,82.5 L93.4,82.5 L93.4,81.6 L94.9,81.6 L94.9,83.4 L95.8,83.4 L95.8,84.3 L98.7,84.3 L98.7,85.9 L99.6,85.9 L99.6,86.9 L102.2,86.9 L102.2,87.8 L103.1,87.8 L103.1,90.7 L104.0,90.7 L104.0,92.7 L104.9,92.7 L104.9,96.0 L105.9,96.0 L105.9,96.9 L107.7,96.9 L107.7,97.8 L106.9,97.8 L106.9,98.9 L107.7,98.9 L107.7,99.8 L106.9,99.8 L106.9,101.3 L105.9,101.3 L105.9,102.2 L106.9,102.2 L106.9,109.3 L105.9,109.3 L105.9,113.3 L104.9,113.3 L104.9,115.2 L105.9,115.2 L105.9,119.6 L104.9,119.6 L104.9,121.5 L104.0,121.5 L104.0,123.8 L103.1,123.8 L103.1,124.8 L99.6,124.8 L99.6,126.6 L98.7,126.6 L98.7,127.7 L97.8,127.7 L97.8,128.6 L94.9,128.6 L94.9,129.6 L93.4,129.6 L93.4,131.0 L90.5,131.0 L90.5,129.6 L87.6,129.6 L87.6,131.0 L85.2,131.0 L85.2,131.9 L84.2,131.9 L84.2,133.0 L82.3,133.0 L82.3,132.0 L81.3,132.0 L81.3,133.0 L75.2,133.0 L75.2,133.9 L69.9,133.9 L69.9,133.0 L69.0,133.0 L69.0,131.9 L67.9,131.9 L67.9,131.0 L67.0,131.0 L67.0,129.6 L60.8,129.6 L60.8,128.6 L58.8,128.6 L58.8,126.7 L57.8,126.7 L57.8,124.8 L56.4,124.8 L56.4,123.8 L55.5,123.8 L55.5,122.4 L54.5,122.4 L54.5,120.4 L53.5,120.4 L53.5,117.5 L52.6,117.5 L52.6,115.0 L53.5,115.0 L53.5,114.3 L51.6,114.3 L51.6,113.3 L50.7,113.3 L50.7,110.3 L51.6,110.3 L51.6,109.4 L50.7,109.4 L50.7,108.4 L49.8,108.4 L49.8,101.3 L50.7,101.3 L50.7,99.8 L51.6,99.8 L51.6,97.0 L50.7,97.0 L50.7,96.0 L51.6,96.0 L51.6,95.1 L52.6,95.1 L52.6,92.5 L53.5,92.5 L53.5,88.7 L54.5,88.7 L54.5,87.8 L55.5,87.8 L55.5,86.9 L58.8,86.9 L58.8,85.9 L61.7,85.9 L61.7,82.5 L62.6,82.5 L62.6,81.6 L63.5,81.6 L63.5,80.6 L66.0,80.6 L66.0,78.7 L69.9,78.7 L69.9,77.2 L77.0,77.2Z" fill="#f8809a"/>
<path d="M77.0,169.3 L80.5,169.3 L80.5,170.3 L83.4,170.3 L83.4,169.3 L84.3,169.3 L84.3,170.3 L85.2,170.3 L85.2,169.3 L86.8,169.3 L86.8,170.3 L87.6,170.3 L87.6,171.8 L89.6,171.8 L89.6,172.7 L90.5,172.7 L90.5,173.7 L91.6,173.7 L91.6,174.7 L92.5,174.7 L92.5,175.6 L93.4,175.6 L93.4,174.7 L94.9,174.7 L94.9,176.5 L95.8,176.5 L95.8,177.4 L98.7,177.4 L98.7,179.0 L99.6,179.0 L99.6,180.0 L102.2,180.0 L102.2,180.9 L103.1,180.9 L103.1,183.8 L104.0,183.8 L104.0,185.8 L104.9,185.8 L104.9,189.1 L105.9,189.1 L105.9,190.0 L107.7,190.0 L107.7,190.9 L106.9,190.9 L106.9,192.0 L107.7,192.0 L107.7,192.9 L106.9,192.9 L106.9,194.4 L105.9,194.4 L105.9,195.3 L106.9,195.3 L106.9,202.4 L105.9,202.4 L105.9,206.4 L104.9,206.4 L104.9,208.3 L105.9,208.3 L105.9,212.7 L104.9,212.7 L104.9,214.6 L104.0,214.6 L104.0,216.9 L103.1,216.9 L103.1,217.9 L99.6,217.9 L99.6,219.7 L98.7,219.7 L98.7,220.8 L97.8,220.8 L97.8,221.7 L94.9,221.7 L94.9,222.7 L93.4,222.7 L93.4,224.1 L90.5,224.1 L90.5,222.7 L87.6,222.7 L87.6,224.1 L85.2,224.1 L85.2,225.0 L84.2,225.0 L84.2,226.1 L82.3,226.1 L82.3,225.1 L81.3,225.1 L81.3,226.1 L75.2,226.1 L75.2,227.0 L69.9,227.0 L69.9,226.1 L69.0,226.1 L69.0,225.0 L67.9,225.0 L67.9,224.1 L67.0,224.1 L67.0,222.7 L60.8,222.7 L60.8,221.7 L58.8,221.7 L58.8,219.8 L57.8,219.8 L57.8,217.9 L56.4,217.9 L56.4,216.9 L55.5,216.9 L55.5,215.5 L54.5,215.5 L54.5,213.5 L53.5,213.5 L53.5,210.6 L52.6,210.6 L52.6,208.1 L53.5,208.1 L53.5,207.4 L51.6,207.4 L51.6,206.4 L50.7,206.4 L50.7,203.4 L51.6,203.4 L51.6,202.5 L50.7,202.5 L50.7,201.5 L49.8,201.5 L49.8,194.4 L50.7,194.4 L50.7,192.9 L51.6,192.9 L51.6,190.1 L50.7,190.1 L50.7,189.1 L51.6,189.1 L51.6,188.2 L52.6,188.2 L52.6,185.6 L53.5,185.6 L53.5,181.8 L54.5,181.8 L54.5,180.9 L55.5,180.9 L55.5,180.0 L58.8,180.0 L58.8,179.0 L61.7,179.0 L61.7,175.6 L62.6,175.6 L62.6,174.7 L63.5,174.7 L63.5,173.7 L66.0,173.7 L66.0,171.8 L69.9,171.8 L69.9,170.3 L77.0,170.3Z" fill="#f8809a"/>
<path d="M171.3,169.3 L174.8,169.3 L174.8,170.3 L177.7,170.3 L177.7,169.3 L178.6,169.3 L178.6,170.3 L179.5,170.3 L179.5,169.3 L181.1,169.3 L181.1,170.3 L181.9,170.3 L181.9,171.8 L183.9,171.8 L183.9,172.7 L184.8,172.7 L184.8,173.7 L185.9,173.7 L185.9,174.7 L186.8,174.7 L186.8,175.6 L187.7,175.6 L187.7,174.7 L189.2,174.7 L189.2,176.5 L190.1,176.5 L190.1,177.4 L193.0,177.4 L193.0,179.0 L193.9,179.0 L193.9,180.0 L196.5,180.0 L196.5,180.9 L197.4,180.9 L197.4,183.8 L198.3,183.8 L198.3,185.8 L199.2,185.8 L199.2,189.1 L200.2,189.1 L200.2,190.0 L202.0,190.0 L202.0,190.9 L201.2,190.9 L201.2,192.0 L202.0,192.0 L202.0,192.9 L201.2,192.9 L201.2,194.4 L200.2,194.4 L200.2,195.3 L201.2,195.3 L201.2,202.4 L200.2,202.4 L200.2,206.4 L199.2,206.4 L199.2,208.3 L200.2,208.3 L200.2,212.7 L199.2,212.7 L199.2,214.6 L198.3,214.6 L198.3,216.9 L197.4,216.9 L197.4,217.9 L193.9,217.9 L193.9,219.7 L193.0,219.7 L193.0,220.8 L192.1,220.8 L192.1,221.7 L189.2,221.7 L189.2,222.7 L187.7,222.7 L187.7,224.1 L184.8,224.1 L184.8,222.7 L181.9,222.7 L181.9,224.1 L179.5,224.1 L179.5,225.0 L178.5,225.0 L178.5,226.1 L176.6,226.1 L176.6,225.1 L175.6,225.1 L175.6,226.1 L169.5,226.1 L169.5,227.0 L164.2,227.0 L164.2,226.1 L163.3,226.1 L163.3,225.0 L162.2,225.0 L162.2,224.1 L161.3,224.1 L161.3,222.7 L155.1,222.7 L155.1,221.7 L153.1,221.7 L153.1,219.8 L152.1,219.8 L152.1,217.9 L150.7,217.9 L150.7,216.9 L149.8,216.9 L149.8,215.5 L148.8,215.5 L148.8,213.5 L147.8,213.5 L147.8,210.6 L146.9,210.6 L146.9,208.1 L147.8,208.1 L147.8,207.4 L145.9,207.4 L145.9,206.4 L145.0,206.4 L145.0,203.4 L145.9,203.4 L145.9,202.5 L145.0,202.5 L145.0,201.5 L144.1,201.5 L144.1,194.4 L145.0,194.4 L145.0,192.9 L145.9,192.9 L145.9,190.1 L145.0,190.1 L145.0,189.1 L145.9,189.1 L145.9,188.2 L146.9,188.2 L146.9,185.6 L147.8,185.6 L147.8,181.8 L148.8,181.8 L148.8,180.9 L149.8,180.9 L149.8,180.0 L153.1,180.0 L153.1,179.0 L156.0,179.0 L156.0,175.6 L156.9,175.6 L156.9,174.7 L157.8,174.7 L157.8,173.7 L160.3,173.7 L160.3,171.8 L164.2,171.8 L164.2,170.3 L171.3,170.3Z" fill="#f8809a"/>
</svg>
<div class="ti" style="left:814px;width:162px"><svg width="162" height="240" viewBox="0 0 162 240"><defs><radialGradient id="tgb"><stop offset="0" stop-color="#636363"/><stop offset="0.62" stop-color="#636363"/><stop offset="1" stop-color="#0f0f0f" stop-opacity="0"/></radialGradient></defs><rect width="162" height="240" fill="#0f0f0f"/><circle cx="36.6" cy="38.8" r="32.0" fill="url(#tgb)"/><circle cx="116.4" cy="38.8" r="32.0" fill="url(#tgb)"/><circle cx="36.6" cy="118.7" r="32.0" fill="url(#tgb)"/><circle cx="116.4" cy="118.7" r="32.0" fill="url(#tgb)"/></svg></div>
<div class="ti" style="left:1342px;width:162px"><svg width="162" height="240" viewBox="0 0 162 240"><defs><radialGradient id="tgc"><stop offset="0" stop-color="#646464"/><stop offset="0.62" stop-color="#646464"/><stop offset="1" stop-color="#111" stop-opacity="0"/></radialGradient></defs><rect width="162" height="240" fill="#111"/><circle cx="25.9" cy="49.9" r="31.5" fill="url(#tgc)"/><circle cx="104.8" cy="49.9" r="31.5" fill="url(#tgc)"/><circle cx="25.9" cy="129.7" r="31.5" fill="url(#tgc)"/><circle cx="104.8" cy="129.7" r="31.5" fill="url(#tgc)"/><circle cx="25.9" cy="210.2" r="31.5" fill="url(#tgc)"/><circle cx="104.8" cy="210.2" r="31.5" fill="url(#tgc)"/></svg></div>
<div class="ti" style="left:1870px;width:162px"><svg width="162" height="240" viewBox="0 0 162 240"><defs><radialGradient id="tgd"><stop offset="0" stop-color="#626262"/><stop offset="0.62" stop-color="#626262"/><stop offset="1" stop-color="#101010" stop-opacity="0"/></radialGradient></defs><rect width="162" height="240" fill="#101010"/><circle cx="29.9" cy="51.6" r="31.5" fill="url(#tgd)"/><circle cx="109.8" cy="51.6" r="31.5" fill="url(#tgd)"/><circle cx="29.9" cy="131.4" r="31.5" fill="url(#tgd)"/><circle cx="109.8" cy="131.4" r="31.5" fill="url(#tgd)"/></svg></div>
<div class="ti" style="left:2398px;width:162px"><svg width="162" height="240" viewBox="0 0 162 240"><defs><radialGradient id="tge"><stop offset="0" stop-color="#626262"/><stop offset="0.62" stop-color="#626262"/><stop offset="1" stop-color="#131313" stop-opacity="0"/></radialGradient></defs><rect width="162" height="240" fill="#131313"/><circle cx="43.4" cy="118.7" r="31.5" fill="url(#tge)"/><circle cx="121.9" cy="118.7" r="31.5" fill="url(#tge)"/><circle cx="43.4" cy="198.7" r="31.5" fill="url(#tge)"/><circle cx="121.9" cy="198.7" r="31.5" fill="url(#tge)"/></svg></div>
<div id="hr"></div>
<div id="ok">확인</div><div id="cancel">취소</div>
</body></html>
